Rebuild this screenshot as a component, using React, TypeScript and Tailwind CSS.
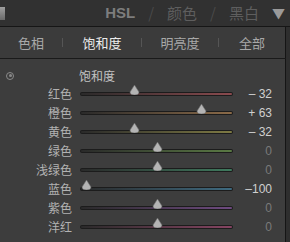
const rows = [
  { name: "红色", value: -32, text: "– 32", color: "#8a4a4e", bright: true },
  { name: "橙色", value: 63, text: "+ 63", color: "#8a6a48", bright: true },
  { name: "黄色", value: -32, text: "– 32", color: "#7e7a44", bright: true },
  { name: "绿色", value: 0, text: "0", color: "#5a7a44", bright: false },
  { name: "浅绿色", value: 0, text: "0", color: "#3f7a5e", bright: false },
  { name: "蓝色", value: -100, text: "–100", color: "#3e6a80", bright: true },
  { name: "紫色", value: 0, text: "0", color: "#6e4a80", bright: false },
  { name: "洋红", value: 0, text: "0", color: "#864462", bright: false },
]

const cjk = "font-['Noto_Sans_CJK_SC',sans-serif]"

const Thumb = () => (
  <svg width="11" height="10" viewBox="0 0 11 10" className="absolute -top-[7px]">
    <path d="M5.5 0 L10 7 Q10 10 5.5 10 Q1 10 1 7 Z" fill="#b4b4b4" stroke="#6a6a6a" strokeWidth="0.6" />
  </svg>
)

const Slider = ({ value, color }: { value: number; color: string }) => (
  <div className="relative h-[4px] w-[153px] rounded-full bg-[#1c1c1c]">
    <div
      className="absolute left-[1px] right-[1px] top-[1px] h-[2px] rounded-full"
      style={{ background: `linear-gradient(to right, #2a2a2a, ${color})` }}
    />
    <div className="absolute top-0" style={{ left: `${77 + value * 0.71 - 5.5}px` }}>
      <Thumb />
    </div>
  </div>
)

const App = () => {
  return (
    <div className={`h-[242px] w-[290px] overflow-hidden bg-[#2e2e2e] ${cjk}`}>
      <div className="relative flex h-[26px] items-center justify-end gap-[13px] bg-[#313131] pr-[5px] text-[15px]">
        <div className="absolute left-0 top-[7px] h-[13px] w-[5px] bg-gradient-to-b from-[#a0a0a0] to-[#6a6a6a]" />
        <span className="font-['Liberation_Sans',sans-serif] font-bold text-[#7d7d7d]">HSL</span>
        <span className="text-[#4a4a4a]">/</span>
        <span className="text-[#5e5e5e]">颜色</span>
        <span className="text-[#4a4a4a]">/</span>
        <span className="text-[#5e5e5e]">黑白</span>
        <span className="text-[13px] text-[#9a9a9a]">▼</span>
      </div>
      <div className="h-[1px] bg-[#161616]" />
      <div className="flex w-[286px] border-r border-[#151515] bg-[#3b3b3b]">
        <div className="flex h-[31px] flex-1 items-center text-[13px]">
          <div className="w-[62px] text-center text-[#a8a8a8]">色相</div>
          <div className="h-[9px] w-px bg-[#555]" />
          <div className="w-[78px] text-center text-[#ececec]">饱和度</div>
          <div className="h-[9px] w-px bg-[#555]" />
          <div className="w-[76px] text-center text-[#a8a8a8]">明亮度</div>
          <div className="h-[9px] w-px bg-[#555]" />
          <div className="flex-1 text-center text-[#a8a8a8]">全部</div>
        </div>
      </div>
      <div className="h-[1px] w-[286px] bg-[#1a1a1a]" />
      <div className="h-[183px] w-[286px] border-r border-[#151515] bg-[#3d3d3d]">
        <div className="flex h-[25px] items-center pt-[8px]">
          <div className="ml-[6px] flex h-[8px] w-[8px] items-center justify-center rounded-full border border-[#8a8a8a]">
            <div className="h-[3px] w-[3px] rounded-full bg-[#8a8a8a]" />
          </div>
          <span className="ml-[65px] text-[12px] text-[#c2c2c2]">饱和度</span>
        </div>
        <div className="flex flex-col">
          {rows.map((r) => (
            <div key={r.name} className="flex h-[19px] items-center">
              <div className="w-[72px] text-right text-[12px] text-[#b2b2b2]">{r.name}</div>
              <div className="ml-[8px]">
                <Slider value={r.value} color={r.color} />
              </div>
              <div
                className={`w-[39px] text-right font-['Liberation_Sans',sans-serif] text-[12px] ${
                  r.bright ? "text-[#d0d0d0]" : "text-[#7a7a7a]"
                }`}
              >
                {r.text}
              </div>
            </div>
          ))}
        </div>
      </div>
    </div>
  )
}

export default App
